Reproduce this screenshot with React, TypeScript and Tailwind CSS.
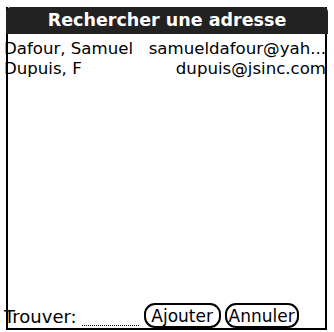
import React from "react";

export default function App() {
  const font = { fontFamily: '"DejaVu Sans", "Liberation Sans", sans-serif' };
  return (
    <div className="w-[334px] h-[332px] bg-white relative overflow-hidden" style={font}>
      <div className="absolute left-[6px] top-[7px] w-[321px] h-[323px] border-l-2 border-r-2 border-b-2 border-black" />
      <div className="relative flex flex-col h-full pt-[7px]">
        <div className="mx-[6px] h-[27px] bg-[#222222] rounded-t-[5px] flex items-center justify-center text-white font-bold text-[17.5px]">
          Rechercher une adresse
        </div>
        <div className="flex flex-col pt-[5px] text-[16.6px] leading-[20px] text-black">
          <div className="flex justify-between pl-[4px] pr-[8px]">
            <span>Dafour, Samuel</span>
            <span>samueldafour@yah...</span>
          </div>
          <div className="flex justify-between pl-[4px] pr-[8px]">
            <span>Dupuis, F</span>
            <span>dupuis@jsinc.com</span>
          </div>
        </div>
        <div className="flex-1" />
        <div className="flex items-end pl-[4px] pb-[4px] h-[30px]">
          <span className="text-[18px] leading-[20px] mb-[1px]">Trouver:</span>
          <span className="ml-[5px] w-[57px] border-b border-dotted border-black mb-[2px]" />
          <button className="ml-[5px] h-[25px] w-[77px] justify-center border-2 border-black rounded-[11px] text-[17px] leading-[18px] flex items-center">Ajouter</button>
          <button className="ml-[4px] h-[25px] w-[74px] justify-center border-2 border-black rounded-[11px] text-[17px] leading-[18px] flex items-center">Annuler</button>
        </div>
      </div>
    </div>
  );
}
